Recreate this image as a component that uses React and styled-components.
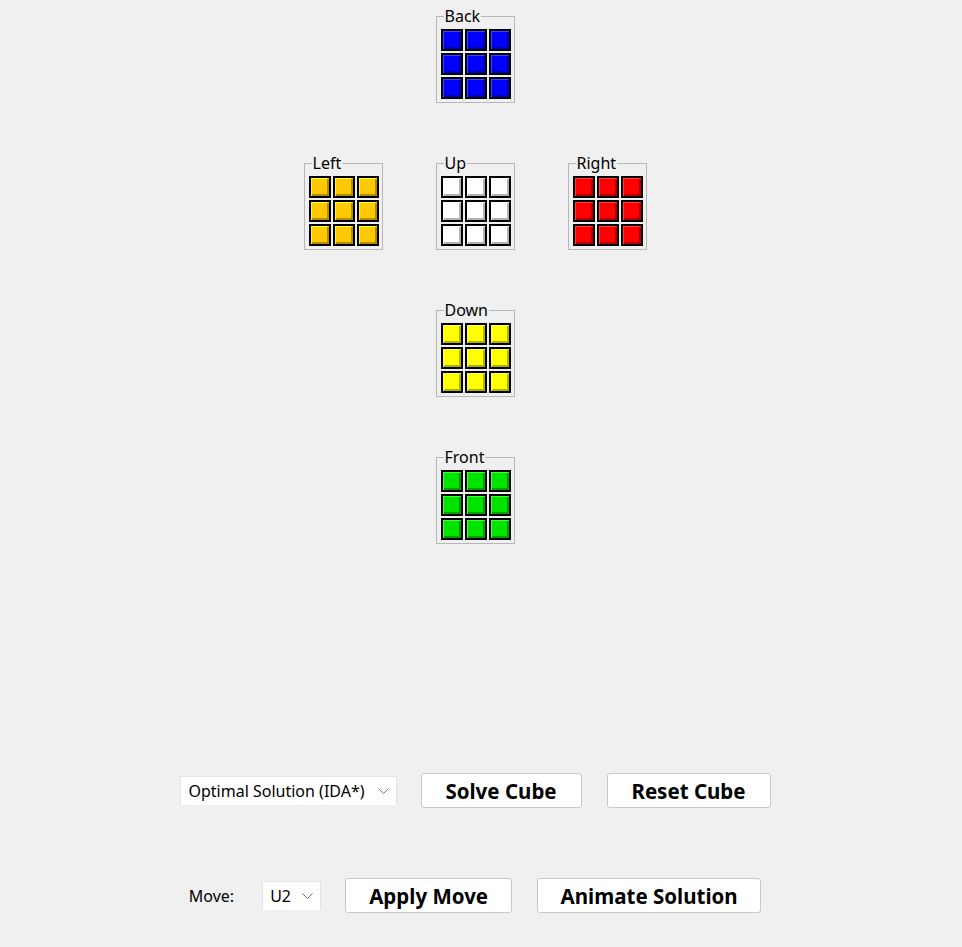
import React from 'react';
import styled, { createGlobalStyle } from 'styled-components';

const Global = createGlobalStyle`
  html, body { margin: 0; padding: 0; background: #f0f0f0; }
  body { font-family: "Noto Sans", "DejaVu Sans", sans-serif; color: #000; }
`;

const Window = styled.div`
  width: 950px;
  height: 947px;
  box-sizing: border-box;
  padding-top: 8px;
  display: flex;
  flex-direction: column;
  align-items: center;
`;

const FaceGrid = styled.div`
  display: grid;
  grid-template-columns: repeat(3, 79px);
  grid-template-rows: repeat(4, 95px);
  column-gap: 53px;
  row-gap: 52px;
`;

const Face = styled.fieldset`
  grid-row: ${(p) => p.$row};
  grid-column: ${(p) => p.$col};
  margin: 0;
  padding: 5px 3px 3px 4px;
  min-width: 0;
  width: 79px;
  box-sizing: border-box;
  border: 1px solid #b7b7b7;
`;

const FaceLabel = styled.legend`
  font-size: 16px;
  line-height: 16px;
  padding: 0 1px;
  margin-left: 3px;
`;

const Cells = styled.div`
  display: grid;
  grid-template-columns: repeat(3, 22px);
  grid-auto-rows: 22px;
  gap: 2px;
`;

const Cell = styled.div`
  box-sizing: border-box;
  width: 22px;
  height: 22px;
  border: 2px solid #000;
  background: ${(p) => p.$fill};
  box-shadow: inset 1px 1px 0 ${(p) => p.$light}, inset -2px -2px 0 ${(p) => p.$dark};
`;

const Row = styled.div`
  display: flex;
  align-items: center;
  gap: 24px;
  margin-top: ${(p) => p.$top}px;
`;

const Button = styled.button`
  width: ${(p) => p.$w}px;
  height: 35px;
  padding: 0;
  background: #fff;
  border: 1px solid #c9c9c9;
  border-radius: 3px;
  font-family: inherit;
  font-weight: 700;
  font-size: 20.5px;
  color: #000;
  & + & { margin-left: 1px; }
`;

const Combo = styled.div`
  width: ${(p) => p.$w}px;
  height: 29px;
  box-sizing: border-box;
  background: #fff;
  border: 1px solid #e3e3e3;
  border-bottom-color: #fff;
  display: flex;
  align-items: center;
  justify-content: space-between;
  padding: 0 7px 0 ${(p) => p.$pl}px;
  font-size: 16px;
  white-space: nowrap;
`;

const FieldLabel = styled.span`
  font-size: 16px;
  margin-right: 4px;
`;

const Chevron = () => (
  <svg width="11" height="6" viewBox="0 0 11 6">
    <path d="M0.5 0.5 L5.5 5.5 L10.5 0.5" fill="none" stroke="#707070" strokeWidth="1" />
  </svg>
);

const COLORS = {
  blue: { fill: '#0000ff', light: '#4040ff', dark: '#0000b2' },
  orange: { fill: '#ffc800', light: '#ffff00', dark: '#b28c00' },
  white: { fill: '#ffffff', light: '#ffffff', dark: '#b2b2b2' },
  red: { fill: '#ff0000', light: '#ff4040', dark: '#b20000' },
  yellow: { fill: '#ffff00', light: '#ffff60', dark: '#b2b200' },
  green: { fill: '#00e400', light: '#40ff40', dark: '#00a000' },
};

const FACES = [
  { name: 'Back', row: 1, col: 2, color: 'blue' },
  { name: 'Left', row: 2, col: 1, color: 'orange' },
  { name: 'Up', row: 2, col: 2, color: 'white' },
  { name: 'Right', row: 2, col: 3, color: 'red' },
  { name: 'Down', row: 3, col: 2, color: 'yellow' },
  { name: 'Front', row: 4, col: 2, color: 'green' },
];

export default function App() {
  return (
    <>
      <Global />
      <Window>
        <FaceGrid>
          {FACES.map((f) => {
            const c = COLORS[f.color];
            return (
              <Face key={f.name} $row={f.row} $col={f.col}>
                <FaceLabel>{f.name}</FaceLabel>
                <Cells>
                  {Array.from({ length: 9 }).map((_, i) => (
                    <Cell key={i} $fill={c.fill} $light={c.light} $dark={c.dark} />
                  ))}
                </Cells>
              </Face>
            );
          })}
        </FaceGrid>
        <Row $top={229}>
          <Combo $w={217} $pl={8}>
            <span>Optimal Solution (IDA*)</span>
            <Chevron />
          </Combo>
          <Button $w={161}>Solve Cube</Button>
          <Button $w={164}>Reset Cube</Button>
        </Row>
        <Row $top={70}>
          <FieldLabel>Move:</FieldLabel>
          <Combo $w={59} $pl={7}>
            <span>U2</span>
            <Chevron />
          </Combo>
          <Button $w={167}>Apply Move</Button>
          <Button $w={224}>Animate Solution</Button>
        </Row>
      </Window>
    </>
  );
}
